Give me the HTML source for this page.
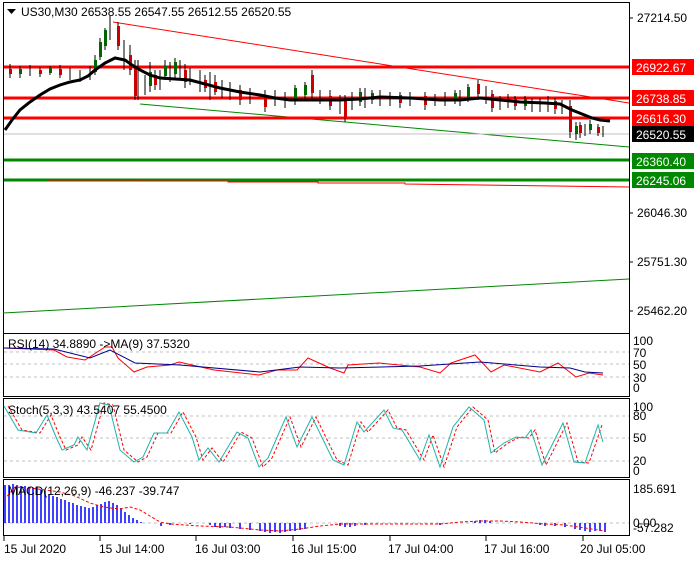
<!DOCTYPE html>
<html><head><meta charset="utf-8"><style>
body{margin:0;background:#fff;width:700px;height:560px;overflow:hidden;font-family:"Liberation Sans",sans-serif}
svg text{font-family:"Liberation Sans",sans-serif;font-size:12px}
</style></head><body>
<svg width="700" height="560" viewBox="0 0 700 560" xmlns="http://www.w3.org/2000/svg">
<rect width="700" height="560" fill="#fff"/>
<g fill="none" stroke="#000" stroke-width="1">
<rect x="3.5" y="2.5" width="626" height="331"/>
<rect x="3.5" y="333.5" width="626" height="63"/>
<rect x="3.5" y="398.5" width="626" height="79"/>
<rect x="3.5" y="479.5" width="626" height="56"/>
</g>
<line x1="113" y1="22" x2="629" y2="103" stroke="#f00" stroke-width="1"/>
<line x1="140" y1="104" x2="629" y2="147" stroke="#080" stroke-width="1"/>
<line x1="3" y1="313" x2="629" y2="279" stroke="#080" stroke-width="1"/>
<line x1="4" y1="134" x2="629" y2="134" stroke="#c0c0c0" stroke-width="1"/>
<g stroke="#f00" stroke-width="3">
<line x1="4" y1="67" x2="629" y2="67"/><line x1="4" y1="98" x2="629" y2="98"/><line x1="4" y1="118" x2="629" y2="118"/>
</g>
<g stroke="#080" stroke-width="3">
<line x1="4" y1="160" x2="629" y2="160"/><line x1="4" y1="180" x2="629" y2="180"/>
</g>
<polyline points="48,180 138,180 138,181 228,181 228,182 318,182 318,183 405,183 405,184 629,187" fill="none" stroke="#f00" stroke-width="1"/>
<g stroke="#000" stroke-width="1">
<path d="M10 64V78M20 66V78M30 65V76M40 67V77M50 66V75M60 65V78M70 68V80M80 70V82M90 66V80M95 55V75M100 38V60M105 28V50M110 16V40M118 22V50M124 40V70M130 45V75M135 60V100M138 60V100M145 75V95M150 62V92M155 70V90M160 70V90M165 60V80M170 62V82M175 58V80M180 60V78M185 64V88M190 68V85M200 70V92M205 75V92M210 72V100M215 75V95M222 80V98M230 82V100M240 85V105M250 88V104M265 90V112M275 90V106M285 92V108M295 85V105M305 82V100M312 70V100M320 90V104M330 90V110M340 95V114M345 95V122M352 92V110M360 88V106M365 88V108M372 90V104M380 90V106M390 92V106M400 92V108M410 92V106M425 92V110M435 94V106M445 92V106M455 90V104M460 90V106M468 84V102M478 80V100M486 86V104M492 90V112M500 96V110M508 94V108M515 96V110M525 96V110M532 98V112M540 98V112M548 96V112M555 98V114M562 100V114M570 100V138M576 122V140M580 122V138M585 124V136M590 120V134M598 124V136M603 126V137"/>
</g>
<g fill="#c00">
<rect x="9" y="69" width="3" height="5"/><rect x="39" y="70" width="3" height="4"/><rect x="59" y="69" width="3" height="6"/><rect x="117" y="26" width="3" height="20"/><rect x="129" y="55" width="3" height="15"/><rect x="134" y="68" width="3" height="28"/><rect x="154" y="75" width="3" height="10"/><rect x="184" y="70" width="3" height="12"/><rect x="204" y="80" width="3" height="8"/><rect x="214" y="82" width="3" height="10"/><rect x="239" y="90" width="3" height="10"/><rect x="264" y="95" width="3" height="12"/><rect x="311" y="75" width="3" height="18"/><rect x="329" y="96" width="3" height="10"/><rect x="344" y="100" width="3" height="18"/><rect x="399" y="95" width="3" height="8"/><rect x="424" y="96" width="3" height="9"/><rect x="477" y="84" width="3" height="10"/><rect x="491" y="94" width="3" height="14"/><rect x="514" y="99" width="3" height="7"/><rect x="554" y="101" width="3" height="8"/><rect x="569" y="106" width="3" height="26"/><rect x="579" y="125" width="3" height="8"/><rect x="597" y="127" width="3" height="6"/>
</g>
<g fill="#060">
<rect x="19" y="69" width="3" height="5"/><rect x="49" y="68" width="3" height="5"/><rect x="94" y="60" width="3" height="12"/><rect x="99" y="42" width="3" height="15"/><rect x="104" y="30" width="3" height="16"/><rect x="149" y="72" width="3" height="14"/><rect x="164" y="66" width="3" height="10"/><rect x="174" y="62" width="3" height="12"/><rect x="294" y="88" width="3" height="12"/><rect x="304" y="85" width="3" height="10"/><rect x="359" y="92" width="3" height="10"/><rect x="371" y="93" width="3" height="7"/><rect x="454" y="93" width="3" height="7"/><rect x="467" y="87" width="3" height="10"/><rect x="524" y="99" width="3" height="7"/><rect x="575" y="126" width="3" height="8"/><rect x="589" y="124" width="3" height="6"/>
</g>
<g stroke="#000" stroke-width="3" fill="none">
<polyline points="5,130 12,120 20,110 30,102 40,95 50,89 60,85 70,82 80,80 88,76 95,70 105,63 115,58 125,60 132,65 140,70 150,75 160,78 175,79 190,80 205,84 220,88 240,92 260,95 275,98 290,100 310,100 340,100 360,99 380,97 410,98 440,100 460,100 480,98 500,100 520,102 545,103 560,104 572,110 582,114 592,118 600,120 610,121"/>
</g>
<g font-size="12">
<text x="637" y="22">27214.50</text>
<text x="637" y="217">26046.30</text>
<text x="637" y="266">25751.30</text>
<text x="637" y="315">25462.20</text>
</g>
<g stroke="#000"><path d="M629 18h4M629 213h4M629 262h4M629 311h4"/></g>
<rect x="632" y="59" width="62" height="16" fill="#f00"/><text x="636" y="72" fill="#fff" font-size="13">26922.67</text>
<rect x="632" y="90" width="62" height="16" fill="#f00"/><text x="636" y="103" fill="#fff" font-size="13">26738.85</text>
<rect x="632" y="110" width="62" height="16" fill="#f00"/><text x="636" y="123" fill="#fff" font-size="13">26616.30</text>
<rect x="632" y="126" width="62" height="16" fill="#000"/><text x="636" y="139" fill="#fff" font-size="13">26520.55</text>
<rect x="632" y="153" width="62" height="16" fill="#080"/><text x="636" y="166" fill="#fff" font-size="13">26360.40</text>
<rect x="632" y="172" width="62" height="16" fill="#080"/><text x="636" y="185" fill="#fff" font-size="13">26245.06</text>
<path d="M7 9h9l-4.5 5z" fill="#000"/>
<text x="21" y="16" fill="#000" font-size="13">US30,M30  26538.55 26547.55 26512.55 26520.55</text>
<g stroke="#c0c0c0" stroke-dasharray="3,3"><path d="M4 352H629M4 364H629M4 377H629"/></g>
<polyline points="4,348 54,350 67,357 85,360 105,347 112,347 118,358 134,372 147,367 170,365 179,362 214,370 259,375 277,370 297,370 308,358 330,368 344,373 348,365 379,363 420,367 440,373 451,363 475,355 491,372 504,365 540,372 558,363 576,377 589,373 603,375" fill="none" stroke="#f00"/>
<polyline points="4,348 54,349 90,358 110,350 135,363 180,365 260,372 300,367 340,368 420,366 480,362 540,367 570,368 585,372 603,373" fill="none" stroke="#00008b"/>
<text x="8" y="348" font-size="13">RSI(14) 34.8890  ->MA(9) 37.5320</text>
<g font-size="12"><text x="633" y="345">100</text><text x="633" y="357">70</text><text x="633" y="369">50</text><text x="633" y="382">30</text><text x="633" y="392">0</text></g>
<g stroke="#c0c0c0" stroke-dasharray="3,3"><path d="M4 416H629M4 438H629M4 461H629"/></g>
<polyline points="8,406 22,430 40,433 51,415 60,437 66,450 78,445 82,437 91,450 104,403 113,405 124,450 138,462 147,457 158,433 171,433 183,412 196,437 203,460 212,448 223,462 241,432 252,438 263,467 272,458 290,417 301,447 316,417 337,460 348,465 361,422 368,432 388,410 397,428 406,430 424,460 433,435 444,467 457,427 473,407 488,420 495,453 508,443 520,437 529,438 535,430 546,465 567,423 578,462 589,463 602,425" fill="none" stroke="#f00" stroke-dasharray="3,2"/>
<polyline points="4,406 18,430 36,433 47,415 56,437 62,450 74,445 78,437 87,450 100,403 109,405 120,450 134,462 143,457 154,433 167,433 179,412 192,437 199,460 208,448 219,462 237,432 248,438 259,467 268,458 286,417 297,447 312,417 333,460 344,465 357,422 364,432 384,410 393,428 402,430 420,460 429,435 440,467 453,427 469,407 484,420 491,453 504,443 516,437 525,438 531,430 542,465 563,423 574,462 585,463 598,425 603,442" fill="none" stroke="#20b2aa"/>
<text x="8" y="414" font-size="13">Stoch(5,3,3) 43.5407 55.4500</text>
<g font-size="12"><text x="633" y="411">100</text><text x="633" y="420">80</text><text x="633" y="442">50</text><text x="633" y="465">20</text><text x="633" y="475">0</text></g>
<g stroke="#c0c0c0" stroke-dasharray="3,3"><path d="M4 523H629"/></g>
<path stroke="#00f" stroke-width="1.5" fill="none" d="M5 523V485M9 523V485M13 523V484M17 523V485M21 523V486M25 523V486M29 523V487M33 523V488M37 523V487M41 523V490M45 523V491M49 523V494M53 523V496M57 523V497M61 523V499M65 523V500M69 523V502M73 523V503M77 523V505M81 523V506M85 523V507M89 523V508M93 523V507M97 523V505M101 523V504M105 523V502M109 523V501M113 523V503M117 523V505M121 523V508M125 523V512M129 523V515M133 523V518M137 523V520M141 523V522M161 523V526M170 523V525M190 523V524M210 523V525M215 523V527M220 523V528M225 523V527M230 523V528M240 523V529M250 523V530M260 523V531M265 523V532M270 523V533M275 523V532M280 523V533M285 523V532M290 523V531M295 523V531M300 523V530M305 523V529M340 523V526M345 523V527M350 523V527M355 523V526M365 523V525M440 523V525M475 523V521M480 523V520M485 523V520M490 523V521M540 523V525M545 523V526M555 523V526M565 523V527M575 523V529M580 523V530M585 523V531M590 523V532M595 523V531M600 523V531M605 523V532"/>
<polyline points="4,500 15,487 30,488 45,490 60,492 75,496 90,503 100,506 110,508 120,509 130,507 140,510 150,516 160,522 170,524 200,526 230,527 260,530 280,531 300,529 320,526 340,524 380,524 440,524 460,522 480,521 500,521 520,522 545,524 565,525 585,528 605,531" fill="none" stroke="#f00" stroke-dasharray="3,2"/>
<text x="8" y="495" font-size="13">MACD(12,26,9) -46.237 -39.747</text>
<g font-size="12"><text x="633" y="493">185.691</text><text x="633" y="527">0.00</text><text x="633" y="532">-57.282</text></g>
<g stroke="#000"><path d="M4 536v5M100 536v5M196 536v5M293 536v5M390 536v5M486 536v5M583 536v5"/></g>
<g font-size="12">
<text x="4" y="553">15 Jul 2020</text>
<text x="99" y="553">15 Jul 14:00</text>
<text x="195" y="553">16 Jul 03:00</text>
<text x="291" y="553">16 Jul 15:00</text>
<text x="388" y="553">17 Jul 04:00</text>
<text x="484" y="553">17 Jul 16:00</text>
<text x="580" y="553">20 Jul 05:00</text>
</g>
</svg>
</body></html>
